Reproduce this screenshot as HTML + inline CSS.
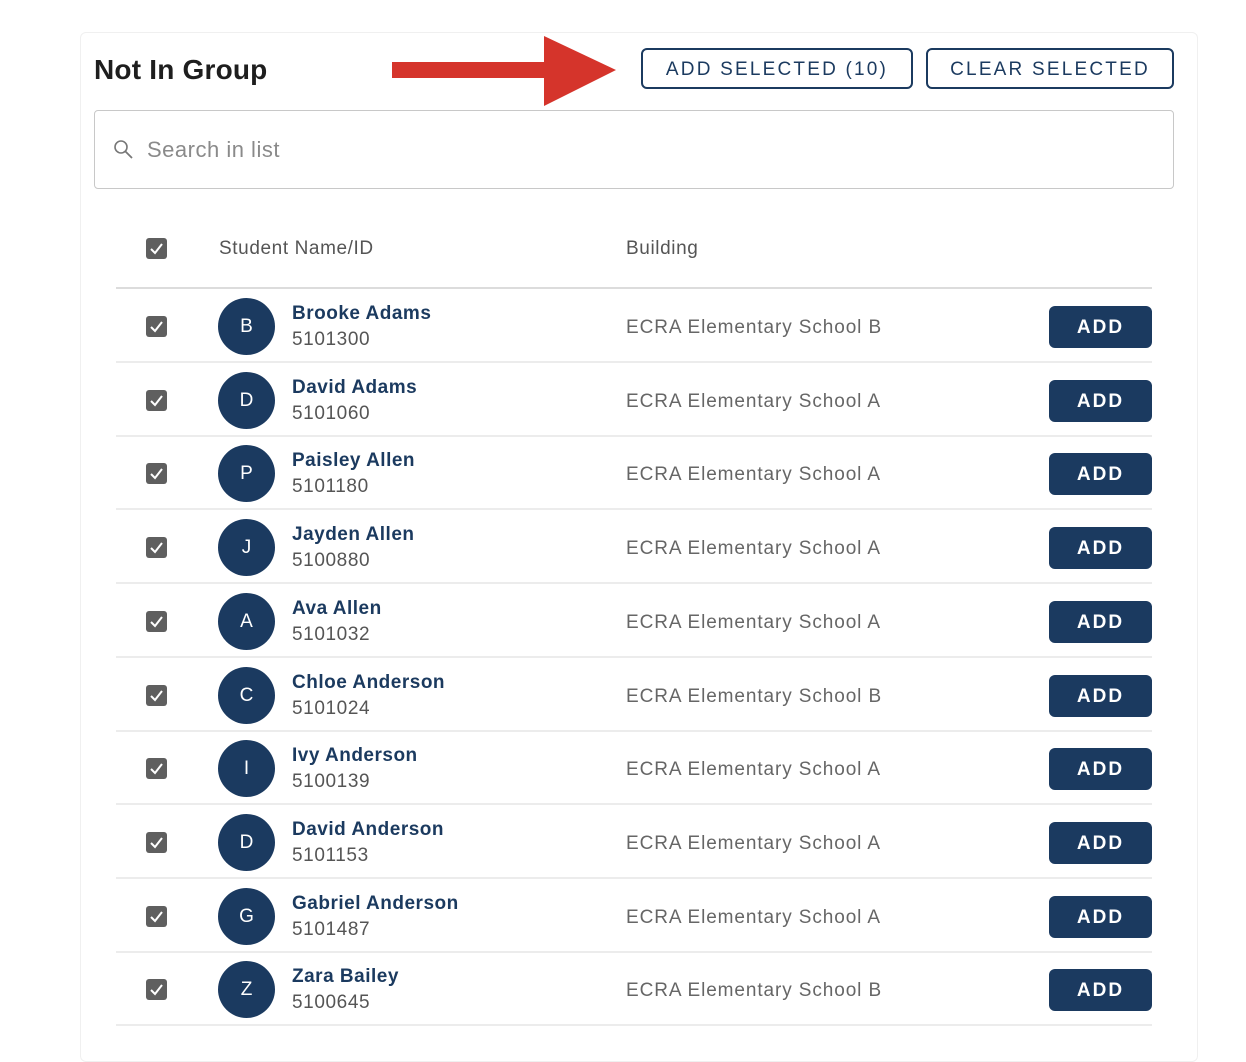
<!DOCTYPE html>
<html><head><style>
*{box-sizing:border-box;margin:0;padding:0}
body{width:1246px;height:1046px;background:#fff;font-family:"Liberation Sans",sans-serif;position:relative;overflow:hidden}
.card{position:absolute;left:80px;top:32px;width:1118px;height:1030px;border:1px solid #f0f0f0;border-radius:6px}
.abs{position:absolute}
h1{position:absolute;left:94px;top:54px;font-size:28px;font-weight:bold;color:#1e1e1e;letter-spacing:0.2px}
.ob{position:absolute;top:48px;height:41px;border:2px solid #1b3a5f;border-radius:6px;color:#1b3a5f;font-size:19px;letter-spacing:2.2px;display:flex;align-items:center;justify-content:center;padding-top:2px}
.search{position:absolute;left:94px;top:110px;width:1080px;height:79px;border:1.5px solid #c8c8c8;border-radius:4px}
.cb{position:absolute;left:146px;width:21px;height:21px;background:#5f5f5f;border-radius:3px}
.cb svg{position:absolute;left:3px;top:3px}
.row{position:absolute;left:116px;width:1036px;height:74px;border-bottom:2px solid #ececec}
.av{position:absolute;left:102px;top:9px;width:57px;height:57px;border-radius:50%;background:#1b3a60;color:#fff;font-size:19px;display:flex;align-items:center;justify-content:center;padding-top:1px}
.nm{position:absolute;left:176px;top:14px;font-size:19px;font-weight:bold;color:#1b3a5f;letter-spacing:0.5px}
.id{position:absolute;left:176px;top:40px;font-size:19px;color:#555;letter-spacing:0.6px}
.bd{position:absolute;left:510px;top:28px;font-size:19px;color:#666;letter-spacing:0.9px}
.add{position:absolute;left:933px;top:17px;width:103px;height:42px;background:#1b3a60;border-radius:6px;color:#fff;font-weight:bold;font-size:19px;letter-spacing:2px;display:flex;align-items:center;justify-content:center;padding-top:2px}
</style></head><body>
<div class="card"></div>
<h1>Not In Group</h1>
<svg class="abs" style="left:390px;top:34px" width="230" height="76"><rect x="2" y="28" width="155" height="16" fill="#d5342b"/><polygon points="154,2 226,36 154,72" fill="#d5342b"/></svg>
<div class="ob" style="left:641px;width:272px">ADD SELECTED (10)</div>
<div class="ob" style="left:926px;width:248px">CLEAR SELECTED</div>
<div class="search"><svg class="abs" style="left:18px;top:28px" width="22" height="22"><circle cx="8" cy="8" r="6" fill="none" stroke="#777" stroke-width="1.6"/><line x1="12.5" y1="12.5" x2="19" y2="19" stroke="#777" stroke-width="1.8"/></svg><span class="abs" style="left:52px;top:26px;font-size:22px;color:#8a8a8a;letter-spacing:0.5px">Search in list</span></div>
<div class="cb" style="top:238px"><svg width="15" height="15"><path d="M2 8l4 4 7-9" fill="none" stroke="#fff" stroke-width="2"/></svg></div>
<div class="abs" style="left:219px;top:238px;font-size:19px;color:#555;letter-spacing:0.6px">Student Name/ID</div>
<div class="abs" style="left:626px;top:238px;font-size:19px;color:#555;letter-spacing:0.6px">Building</div>
<div class="abs" style="left:116px;top:287px;width:1036px;height:2px;background:#dcdcdc"></div>
<div id="rows"></div>
<script>
var d=[["B","Brooke Adams","5101300","B"],["D","David Adams","5101060","A"],["P","Paisley Allen","5101180","A"],["J","Jayden Allen","5100880","A"],["A","Ava Allen","5101032","A"],["C","Chloe Anderson","5101024","B"],["I","Ivy Anderson","5100139","A"],["D","David Anderson","5101153","A"],["G","Gabriel Anderson","5101487","A"],["Z","Zara Bailey","5100645","B"]];
var h="";d.forEach(function(r,i){var t=289+i*73.7;
h+='<div class="cb" style="top:'+(t+27)+'px"><svg width="15" height="15"><path d="M2 8l4 4 7-9" fill="none" stroke="#fff" stroke-width="2"/></svg></div>';
h+='<div class="row" style="top:'+t+'px"><div class="av">'+r[0]+'</div><div class="nm">'+r[1]+'</div><div class="id">'+r[2]+'</div><div class="bd">ECRA Elementary School '+r[3]+'</div><div class="add">ADD</div></div>';});
document.getElementById("rows").innerHTML=h;
</script>
</body></html>
